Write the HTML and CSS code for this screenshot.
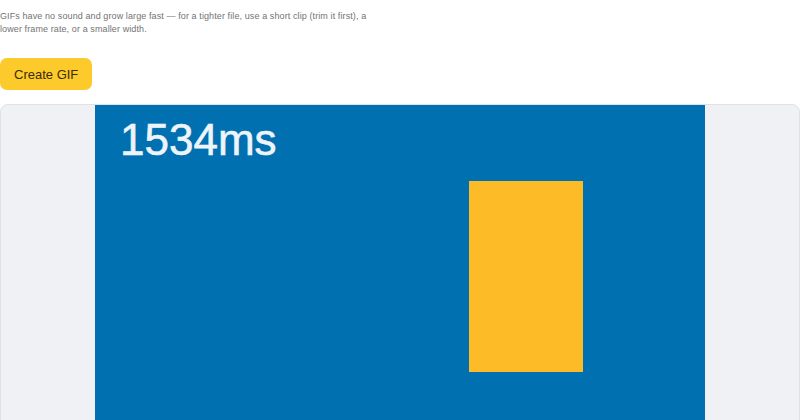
FILE: index.html
```html
<!DOCTYPE html>
<html>
<head>
<meta charset="utf-8">
<link rel="stylesheet" href="styles.css">
</head>
<body>
<p class="hint">GIFs have no sound and grow large fast — for a tighter file, use a short clip (trim it first), a lower frame rate, or a smaller width.</p>
<button class="create">Create GIF</button>
<div class="preview">
  <div class="canvas">
    <span class="time">1534ms</span>
    <div class="box"></div>
  </div>
</div>
</body>
</html>
```
FILE: styles.css
```css
html, body {
  margin: 0;
  padding: 0;
  background: #ffffff;
  font-family: "Liberation Sans", Arial, sans-serif;
}
.hint {
  margin: 10px 0 0 0;
  max-width: 372px;
  font-size: 9px;
  line-height: 13px;
  letter-spacing: 0.1px;
  color: #737373;
}
.create {
  display: block;
  margin-top: 22px;
  height: 32px;
  padding: 0 14px;
  border: none;
  border-radius: 7px;
  background: #fdca2c;
  color: #3a2c05;
  font-family: "Liberation Sans", Arial, sans-serif;
  font-size: 13px;
}
.preview {
  margin-top: 14px;
  border: 1px solid #dfe1e6;
  border-radius: 8px;
  background: #f0f1f5;
  display: flex;
  justify-content: center;
  overflow: hidden;
}
.canvas {
  position: relative;
  width: 610px;
  height: 343px;
  background: #0070b0;
}
.time {
  position: absolute;
  left: 25px;
  top: 11px;
  font-size: 44px;
  line-height: 48px;
  color: #eef4fa;
  -webkit-text-stroke: 0.6px #eef4fa;
}
.box {
  position: absolute;
  left: 374px;
  top: 76px;
  width: 114px;
  height: 191px;
  background: #fdbb27;
}
```
